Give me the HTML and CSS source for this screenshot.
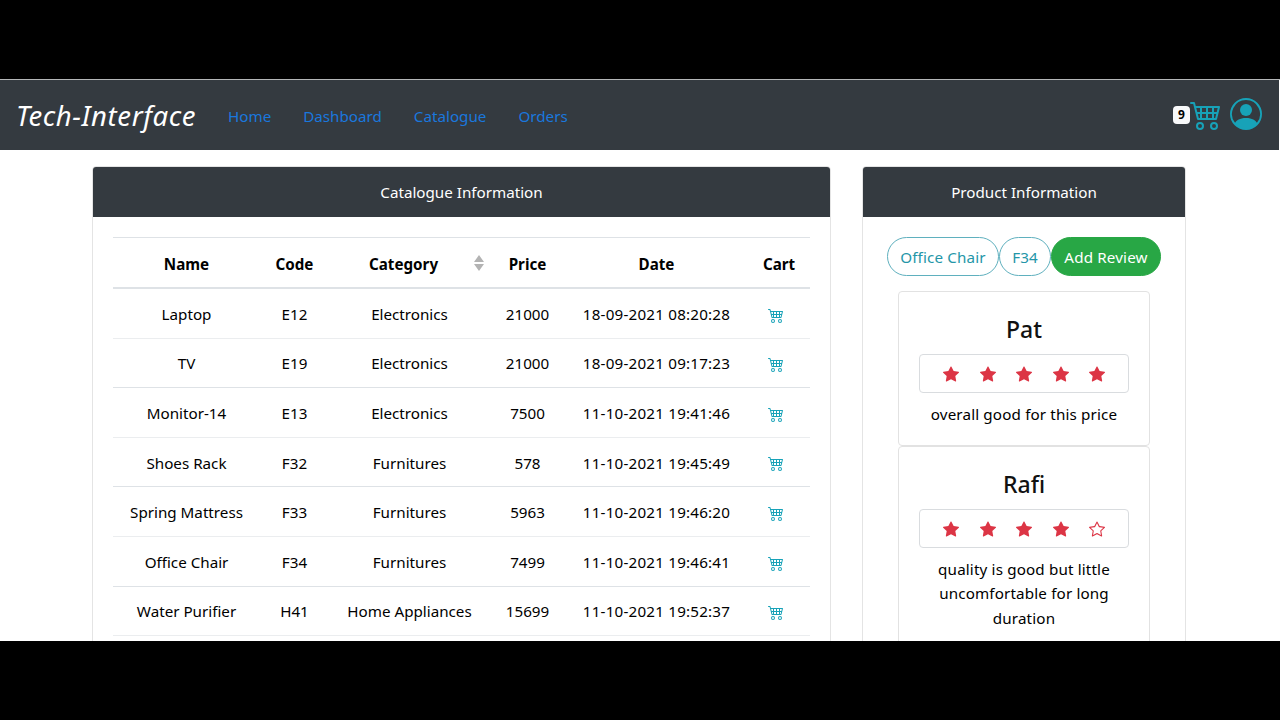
FILE: index.html
```
<!DOCTYPE html>
<html lang="en">
<head>
    <meta charset="UTF-8">
    <meta name="viewport" content="width=device-width, initial-scale=1.0">
    <title>Tech-Interface</title>
    <link rel="stylesheet" href="styles.css">
</head>
<body>

    <!-- shared icons -->
    <svg class="sprite" xmlns="http://www.w3.org/2000/svg">
        <symbol id="cart" viewBox="0 0 16 16">
            <path d="M0 2.5A.5.5 0 0 1 .5 2H2a.5.5 0 0 1 .485.379L2.89 4H14.5a.5.5 0 0 1 .485.621l-1.5 6A.5.5 0 0 1 13 11H4a.5.5 0 0 1-.485-.379L1.61 3H.5a.5.5 0 0 1-.5-.5zM3.14 5l.5 2H5V5H3.14zM6 5v2h2V5H6zm3 0v2h2V5H9zm3 0v2h1.36l.5-2H12zm1.11 3H12v2h.61l.5-2zM11 8H9v2h2V8zM8 8H6v2h2V8zM5 8H3.89l.5 2H5V8zm0 5a1 1 0 1 0 0 2 1 1 0 0 0 0-2zm-2 1a2 2 0 1 1 4 0 2 2 0 0 1-4 0zm9-1a1 1 0 1 0 0 2 1 1 0 0 0 0-2zm-2 1a2 2 0 1 1 4 0 2 2 0 0 1-4 0z"/>
        </symbol>
        <symbol id="person" viewBox="0 0 16 16">
            <path d="M11 6a3 3 0 1 1-6 0 3 3 0 0 1 6 0z"/>
            <path fill-rule="evenodd" d="M0 8a8 8 0 1 1 16 0A8 8 0 0 1 0 8zm8-7a7 7 0 0 0-5.468 11.37C3.242 11.226 4.805 10 8 10s4.757 1.225 5.468 2.37A7 7 0 0 0 8 1z"/>
        </symbol>
        <symbol id="star-fill" viewBox="0 0 16 16">
            <path d="M3.612 15.443c-.386.198-.824-.149-.746-.592l.83-4.73L.173 6.765c-.329-.314-.158-.888.283-.95l4.898-.696L7.538.792c.197-.39.73-.39.927 0l2.184 4.327 4.898.696c.441.062.612.636.282.95l-3.522 3.356.83 4.73c.078.443-.36.79-.746.592L8 13.187l-4.389 2.256z"/>
        </symbol>
        <symbol id="star" viewBox="0 0 16 16">
            <path d="M2.866 14.85c-.078.444.36.791.746.593l4.39-2.256 4.389 2.256c.386.198.824-.149.746-.592l-.83-4.73 3.522-3.356c.33-.314.16-.888-.282-.95l-4.898-.696L8.465.792a.513.513 0 0 0-.927 0L5.354 5.12l-4.898.696c-.441.062-.612.636-.283.95l3.523 3.356-.83 4.73zm4.905-2.767-3.686 1.894.694-3.957a.565.565 0 0 0-.163-.505L1.71 6.745l4.052-.576a.525.525 0 0 0 .393-.288L8 2.223l1.847 3.658a.525.525 0 0 0 .393.288l4.052.575-2.906 2.77a.565.565 0 0 0-.163.506l.694 3.957-3.686-1.894a.503.503 0 0 0-.461 0z"/>
        </symbol>
    </svg>

    <div class="screen">
        <nav class="navbar">
            <a class="brand">Tech-Interface</a>
            <div class="nav-links">
                <a>Home</a>
                <a>Dashboard</a>
                <a>Catalogue</a>
                <a>Orders</a>
            </div>
            <div class="nav-right">
                <span class="badge">9</span>
                <svg class="nav-icon"><use href="#cart"/></svg>
                <svg class="nav-icon nav-user"><use href="#person"/></svg>
            </div>
        </nav>

        <main class="content">
            <section class="card catalogue">
                <div class="card-header">Catalogue Information</div>
                <div class="card-body">
                    <table class="table">
                        <colgroup>
                            <col class="col-name"><col class="col-code"><col class="col-category">
                            <col class="col-price"><col class="col-date"><col class="col-cart">
                        </colgroup>
                        <thead>
                            <tr>
                                <th>Name</th>
                                <th>Code</th>
                                <th>
                                    <div class="sortable">
                                        <span>Category</span>
                                        <svg class="sort" viewBox="0 0 10 16"><path d="M5 0l5 7H0zM5 16l5-7H0z"/></svg>
                                    </div>
                                </th>
                                <th>Price</th>
                                <th>Date</th>
                                <th>Cart</th>
                            </tr>
                        </thead>
                        <tbody>
                            <tr><td>Laptop</td><td>E12</td><td>Electronics</td><td>21000</td><td class="date">18-09-2021 08:20:28</td><td class="cart"><svg><use href="#cart"/></svg></td></tr>
                            <tr><td>TV</td><td>E19</td><td>Electronics</td><td>21000</td><td class="date">18-09-2021 09:17:23</td><td class="cart"><svg><use href="#cart"/></svg></td></tr>
                            <tr><td>Monitor-14</td><td>E13</td><td>Electronics</td><td>7500</td><td class="date">11-10-2021 19:41:46</td><td class="cart"><svg><use href="#cart"/></svg></td></tr>
                            <tr><td>Shoes Rack</td><td>F32</td><td>Furnitures</td><td>578</td><td class="date">11-10-2021 19:45:49</td><td class="cart"><svg><use href="#cart"/></svg></td></tr>
                            <tr><td>Spring Mattress</td><td>F33</td><td>Furnitures</td><td>5963</td><td class="date">11-10-2021 19:46:20</td><td class="cart"><svg><use href="#cart"/></svg></td></tr>
                            <tr><td>Office Chair</td><td>F34</td><td>Furnitures</td><td>7499</td><td class="date">11-10-2021 19:46:41</td><td class="cart"><svg><use href="#cart"/></svg></td></tr>
                            <tr><td>Water Purifier</td><td>H41</td><td>Home Appliances</td><td>15699</td><td class="date">11-10-2021 19:52:37</td><td class="cart"><svg><use href="#cart"/></svg></td></tr>
                        </tbody>
                    </table>
                </div>
            </section>

            <section class="card product">
                <div class="card-header">Product Information</div>
                <div class="card-body">
                    <div class="pills">
                        <button class="pill pill-name">Office Chair</button>
                        <button class="pill pill-code">F34</button>
                        <button class="pill pill-add">Add Review</button>
                    </div>
                    <div class="review">
                        <h4>Pat</h4>
                        <div class="stars">
                            <svg><use href="#star-fill"/></svg>
                            <svg><use href="#star-fill"/></svg>
                            <svg><use href="#star-fill"/></svg>
                            <svg><use href="#star-fill"/></svg>
                            <svg><use href="#star-fill"/></svg>
                        </div>
                        <p>overall good for this price</p>
                    </div>
                    <div class="review">
                        <h4>Rafi</h4>
                        <div class="stars">
                            <svg><use href="#star-fill"/></svg>
                            <svg><use href="#star-fill"/></svg>
                            <svg><use href="#star-fill"/></svg>
                            <svg><use href="#star-fill"/></svg>
                            <svg><use href="#star"/></svg>
                        </div>
                        <p>quality is good but little uncomfortable for long duration</p>
                    </div>
                </div>
            </section>
        </main>
    </div>

</body>
</html>
```
FILE: styles.css
```
* {
    box-sizing: border-box;
}
body {
    margin: 0;
    padding: 79px 0;
    height: 720px;
    overflow: hidden;
    background: #000;
    color: #000;
    font-family: "Noto Sans", sans-serif;
    font-size: 15.2px;
    line-height: 24.3px;
}
.sprite {
    display: none;
}
.screen {
    height: 562px;
    overflow: hidden;
    background: #fff;
    border-top: 1px solid #b4b6b8;
}
.navbar {
    display: flex;
    align-items: center;
    height: 70px;
    margin-right: 1px;
    padding: 0 17px 0 16px;
    background: #343a40;
}
.brand {
    width: 212px;
    padding-top: 2px;
    color: #fff;
    font-size: 27.5px;
    font-style: italic;
    font-weight: 400;
    letter-spacing: 0.6px;
    line-height: 40px;
}
.nav-links {
    display: flex;
    gap: 32px;
    padding-top: 2px;
    color: #1a77dd;
}
.nav-right {
    display: flex;
    align-items: center;
    margin-left: auto;
    color: #17a2b8;
}
.badge {
    width: 17px;
    height: 18px;
    border-radius: 4px;
    background: #f8f9fa;
    color: #000;
    font-size: 12px;
    font-weight: bold;
    line-height: 18px;
    text-align: center;
}
svg {
    fill: currentColor;
}
.nav-icon {
    width: 32px;
    height: 32px;
    margin-bottom: 2px;
}
.nav-user {
    margin-left: 8px;
    margin-bottom: 3px;
}
.content {
    display: flex;
    align-items: flex-start;
    gap: 31px;
    padding: 16px 0 0 92px;
}
.card {
    height: 560px;
    border: 1px solid #e4e4e4;
    border-radius: 4px;
}
.catalogue {
    width: 739px;
}
.product {
    width: 324px;
}
.card-header {
    height: 50px;
    border-radius: 3px 3px 0 0;
    background: #343a40;
    color: #fff;
    line-height: 51px;
    text-align: center;
}
.card-body {
    padding: 20px;
}
.table {
    width: 697px;
    table-layout: fixed;
    border-collapse: separate;
    border-spacing: 0;
    text-align: center;
}
.col-name { width: 147px; }
.col-code { width: 69px; }
.col-category { width: 161px; }
.col-price { width: 75px; }
.col-date { width: 183px; }
.col-cart { width: 62px; }
.table th {
    height: 52px;
    padding: 3px 0 0;
    border-top: 1px solid #dee2e6;
    border-bottom: 2px solid #dee2e6;
}
.table td {
    height: 49.6px;
    padding: 1.5px 0 0;
    border-bottom: 1px solid #dee2e6;
}
.table tbody tr:nth-child(odd) td {
    border-bottom-color: #ebedef;
}
.table .date {
    letter-spacing: 0.2px;
}
.sortable {
    display: flex;
    align-items: center;
    justify-content: space-between;
    padding: 0 6px 0 40px;
}
.sort {
    width: 10px;
    height: 16px;
    margin-bottom: 2px;
    color: #b3b3b3;
}
.table .cart {
    padding-right: 7px;
    color: #17a2b8;
}
.cart svg {
    display: block;
    width: 16px;
    height: 16px;
    margin: 1px auto 0;
}
.pills {
    display: flex;
    justify-content: center;
    height: 39px;
    margin: 0 0 15px 0;
}
.pill {
    padding: 2px 0 0;
    border: 1px solid #5fb0be;
    border-radius: 20px;
    background: #fff;
    color: #2496a8;
    font: inherit;
    letter-spacing: 0.15px;
}
.pill-name { width: 112px; }
.pill-code { width: 52px; }
.pill-add {
    width: 110px;
    border-color: #28a745;
    background: #28a745;
    color: #fff;
}
.review {
    width: 252px;
    height: 155px;
    margin: 0 auto;
    padding: 20px;
    border: 1px solid #e2e2e2;
    border-radius: 4px;
    text-align: center;
}
.review:last-child {
    height: 204px;
}
.review h4 {
    margin: 3px 0 10px;
    color: #111;
    font-size: 23px;
    font-weight: 500;
    line-height: 29px;
}
.stars {
    display: flex;
    align-items: center;
    justify-content: center;
    gap: 20.5px;
    height: 39px;
    border: 1px solid #d9dcdf;
    border-radius: 4px;
    color: #dc3545;
}
.stars svg {
    width: 16px;
    height: 16px;
}
.review p {
    margin: 9px -4px 0;
    letter-spacing: 0.15px;
}
```
